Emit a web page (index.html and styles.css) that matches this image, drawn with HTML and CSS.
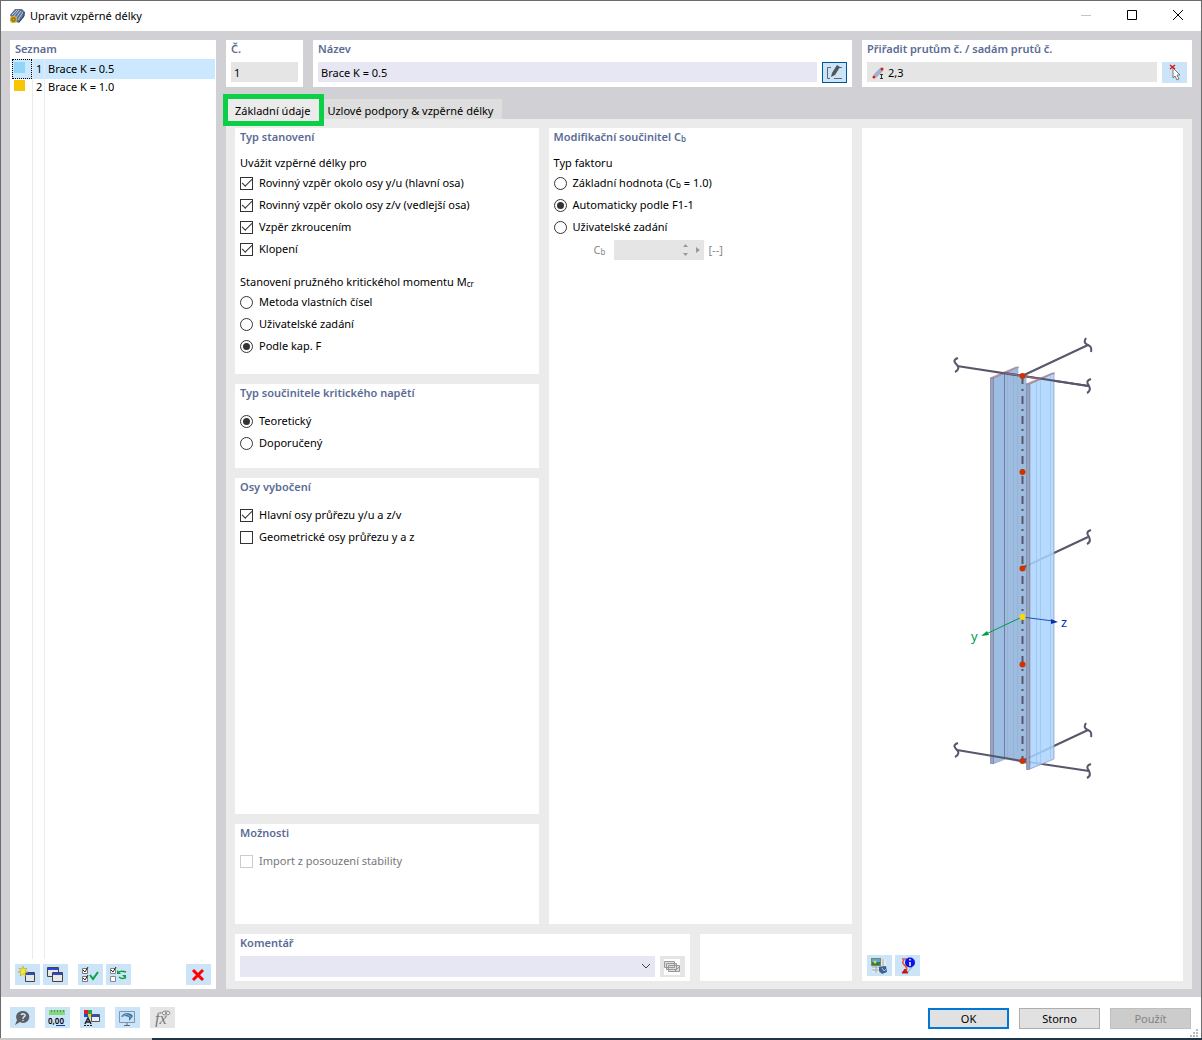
FILE: index.html
```
<!DOCTYPE html>
<html lang="cs">
<head>
    <meta charset="UTF-8">
    <meta name="viewport" content="width=device-width, initial-scale=1.0">
    <title>Upravit vzpěrné délky</title>
    <link rel="stylesheet" href="styles.css">
</head>
<body>
    <div class="window">
        <header class="titlebar">
            <svg class="app-icon" width="16" height="16" viewBox="0 0 16 16">
                <path d="M1 7l5-6 7 0 3 3-1 5-5 6-6-2z" fill="#5d7292"/>
                <path d="M3 7l5-5M5 8l5-6M7 10l5-7M9 12l5-8" stroke="#b9cbe2" stroke-width="1"/>
                <path d="M10 14l5-6V4" fill="none" stroke="#2c3d5c"/>
                <rect x="1" y="8" width="7" height="7" rx="3" fill="#d9ad2b"/>
                <path d="M3 10h3v3H3z" fill="none" stroke="#7b5c14"/>
            </svg>
            <h1>Upravit vzpěrné délky</h1>
            <div class="window-controls">
                <button type="button" aria-label="Minimalizovat" disabled>
                    <svg width="12" height="12" viewBox="0 0 12 12"><path d="M1 5.500h10" stroke="#c4c4c4"/></svg>
                </button>
                <button type="button" aria-label="Maximalizovat">
                    <svg width="12" height="12" viewBox="0 0 12 12"><path d="M1.500 .5h9v9h-9z" fill="none" stroke="#000"/></svg>
                </button>
                <button type="button" aria-label="Zavřít">
                    <svg width="12" height="12" viewBox="0 0 12 12"><path d="M1 0l10 10M11 0L1 10" stroke="#000"/></svg>
                </button>
            </div>
        </header>

        <main class="workspace">
            <aside class="card sidebar">
                <h2>Seznam</h2>
                <ul class="list">
                    <li class="selected"><span class="cell"><span class="swatch blue"></span></span><span class="number">1</span><span>Brace K = 0.5</span></li>
                    <li><span class="cell"><span class="swatch yellow"></span></span><span class="number">2</span><span>Brace K = 1.0</span></li>
                </ul>
                <div class="toolbar">
                    <button type="button" class="tool" aria-label="Nový">
                        <svg width="18" height="18" viewBox="0 0 18 18">
                            <path d="M7.500 6.500h9v9h-9z" fill="#e8e8e8" stroke="#444"/>
                            <path d="M8 7h8v2H8z" fill="#2b48d8"/>
                            <path d="M5 0l1 3 3-1-2 3 3 1-3 1 1 3-3-2-3 2 1-3-3-1 3-1-2-3 3 1z" fill="#f4ea2a" stroke="#a59b28" stroke-width=".5"/>
                        </svg>
                    </button>
                    <button type="button" class="tool" aria-label="Kopírovat">
                        <svg width="18" height="18" viewBox="0 0 18 18">
                            <path d="M1.500 1.500h11v9h-11z" fill="#e8e8e8" stroke="#444"/>
                            <path d="M2 2h10v2H2z" fill="#2b48d8"/>
                            <path d="M6.500 6.500h10v9h-10z" fill="#e8e8e8" stroke="#444"/>
                            <path d="M7 7h9v2H7z" fill="#2b48d8"/>
                        </svg>
                    </button>
                    <button type="button" class="tool spaced" aria-label="Vybrat vše">
                        <svg width="18" height="18" viewBox="0 0 18 18">
                            <path d="M1.500 2.500h5v5h-5zM1.500 10.500h5v5h-5z" fill="#fff" stroke="#777"/>
                            <path d="M2 4l2 2 3-5M2 12l2 2 3-5" fill="none" stroke="#222"/>
                            <path d="M9 9l3 4 5-7" fill="none" stroke="#10a040" stroke-width="2"/>
                        </svg>
                    </button>
                    <button type="button" class="tool" aria-label="Obrátit výběr">
                        <svg width="18" height="18" viewBox="0 0 18 18">
                            <path d="M1.500 2.500h5v5h-5zM1.500 10.500h5v5h-5z" fill="#fff" stroke="#888"/>
                            <path d="M2 4l2 2 3-5" fill="none" stroke="#222"/>
                            <path d="M9 7c2-3 5-2 8-1M17 11c-2 2-5 2-7 0" fill="none" stroke="#10a040" stroke-width="1.500"/>
                            <path d="M8 4v4h4zM17 13V9h-4z" fill="#10a040"/>
                        </svg>
                    </button>
                    <button type="button" class="tool last" aria-label="Smazat">
                        <svg width="18" height="18" viewBox="0 0 18 18"><path d="M4 4l10 10M14 4L4 14" stroke="#f00" stroke-width="3"/></svg>
                    </button>
                </div>
            </aside>

            <section class="content">
                <div class="top-row">
                    <div class="card">
                        <h2><label for="number">Č.</label></h2>
                        <input class="field readonly" type="text" id="number" value="1" readonly>
                    </div>
                    <div class="card">
                        <h2><label for="name">Název</label></h2>
                        <div class="field-row">
                            <input class="field" type="text" id="name" value="Brace K = 0.5">
                            <button type="button" class="tool outlined" aria-label="Upravit název">
                                <svg width="18" height="18" viewBox="0 0 18 18">
                                    <path d="M6 3.500H2.500v11H5M9 14.500h8M14 3.500h3" fill="none" stroke="#666"/>
                                    <path d="M6 13l1-4 5-8 3 2-5 8z" fill="#555"/>
                                </svg>
                            </button>
                        </div>
                    </div>
                    <div class="card">
                        <h2><label for="members">Přiřadit prutům č. / sadám prutů č.</label></h2>
                        <div class="field-row">
                            <div class="field readonly icon-field">
                                <svg width="14" height="14" viewBox="0 0 14 14">
                                    <path d="M3 10l7-7" stroke="#9eb2cf" stroke-width="4"/>
                                    <circle cx="2" cy="11" r="1.500" fill="#e01818"/>
                                    <circle cx="10" cy="3" r="1.500" fill="#e01818"/>
                                    <path d="M8 8.500h3M8 12.500h3M9.500 8v4" stroke="#333"/>
                                </svg>
                                <input type="text" id="members" value="2,3" readonly>
                            </div>
                            <button type="button" class="tool" aria-label="Vybrat pruty">
                                <svg width="18" height="18" viewBox="0 0 18 18">
                                    <path d="M8 4v10l2-2 2 4 2-1-2-4h3z" fill="#fff" stroke="#777"/>
                                    <path d="M5 1l5 4M10 1L5 5" stroke="#e01818" stroke-width="1.500"/>
                                </svg>
                            </button>
                        </div>
                    </div>
                </div>

                <div class="tabs" role="tablist">
                    <div class="tab-marked">
                        <button type="button" class="tab active" role="tab" aria-selected="true">Základní údaje</button>
                    </div>
                    <button type="button" class="tab" role="tab" aria-selected="false">Uzlové podpory &amp; vzpěrné délky</button>
                </div>

                <div class="pane">
                    <div class="settings">
                        <div class="columns">
                            <div class="stack">
                                <div class="card card-type">
                                    <h2>Typ stanovení</h2>
                                    <p class="caption">Uvážit vzpěrné délky pro</p>
                                    <label class="option"><input type="checkbox" checked>Rovinný vzpěr okolo osy y/u (hlavní osa)</label>
                                    <label class="option"><input type="checkbox" checked>Rovinný vzpěr okolo osy z/v (vedlejší osa)</label>
                                    <label class="option"><input type="checkbox" checked>Vzpěr zkroucením</label>
                                    <label class="option"><input type="checkbox" checked>Klopení</label>
                                    <p class="caption second">Stanovení pružného kritickéhol momentu M<sub>cr</sub></p>
                                    <label class="option"><input type="radio" name="moment">Metoda vlastních čísel</label>
                                    <label class="option"><input type="radio" name="moment">Uživatelské zadání</label>
                                    <label class="option"><input type="radio" name="moment" checked>Podle kap. F</label>
                                </div>
                                <div class="card card-stress">
                                    <h2>Typ součinitele kritického napětí</h2>
                                    <label class="option"><input type="radio" name="stress" checked>Teoretický</label>
                                    <label class="option"><input type="radio" name="stress">Doporučený</label>
                                </div>
                                <div class="card card-axes">
                                    <h2>Osy vybočení</h2>
                                    <label class="option"><input type="checkbox" checked>Hlavní osy průřezu y/u a z/v</label>
                                    <label class="option"><input type="checkbox">Geometrické osy průřezu y a z</label>
                                </div>
                                <div class="card card-options">
                                    <h2>Možnosti</h2>
                                    <label class="option disabled"><input type="checkbox" disabled>Import z posouzení stability</label>
                                </div>
                            </div>
                            <div class="card">
                                <h2>Modifikační součinitel C<sub>b</sub></h2>
                                <p class="caption">Typ faktoru</p>
                                <label class="option"><input type="radio" name="factor"><span>Základní hodnota (C<sub>b</sub> = 1.0)</span></label>
                                <label class="option"><input type="radio" name="factor" checked>Automaticky podle F1-1</label>
                                <label class="option"><input type="radio" name="factor">Uživatelské zadání</label>
                                <div class="factor">
                                    <label for="cb">C<sub>b</sub></label>
                                    <div class="spinner">
                                        <input type="text" id="cb" disabled>
                                        <svg width="22" height="14" viewBox="0 0 22 14">
                                            <path d="M1 4h5L3.500 1zM1 10h5l-2.500 3zM14 4v6l4-3z" fill="#999"/>
                                        </svg>
                                    </div>
                                    <span>[--]</span>
                                </div>
                            </div>
                        </div>
                        <div class="bottom-row">
                            <div class="card">
                                <h2><label for="comment">Komentář</label></h2>
                                <div class="field-row">
                                    <div class="combo">
                                        <select class="field" id="comment"><option></option></select>
                                        <svg width="10" height="6" viewBox="0 0 10 6"><path d="M1 1l4 4 4-4" fill="none" stroke="#444"/></svg>
                                    </div>
                                    <button type="button" class="tool" aria-label="Komentáře" disabled>
                                        <svg width="18" height="18" viewBox="0 0 18 18">
                                            <path d="M1 1h16v16H1z" fill="#fff"/>
                                            <path d="M1.500 3.500h10v6h-10zM3.500 5.500h10v6h-10zM5.500 7.500h11v6h-11z" fill="#ddd" stroke="#999"/>
                                            <path d="M12 13l4-4" stroke="#999"/>
                                        </svg>
                                    </button>
                                </div>
                            </div>
                            <div class="card"></div>
                        </div>
                    </div>

                    <div class="card preview">
                        <svg class="model" width="161" height="480" viewBox="942 301 161 480">
                            <!-- back flange and web -->
                            <path d="M993 377l25-10v386l-25 10z" fill="#9dbde2" stroke="#8b95b5" stroke-width=".5"/>
                            <path d="M1004.500 373l22 4v386l-22-5z" fill="#9dbce0"/>
                            <path d="M1004.500 372v386" stroke="#747d9b"/>
                            <path d="M1007.500 374v383M1013.500 374v381M1017.500 375v376" stroke="#8dabd0" stroke-width=".5"/>
                            <path d="M990.500 377.500h3v385h-3z" fill="#94a4c4" stroke="#807f99" stroke-width=".7"/>
                            <path d="M990 377l26-11h3l-25 11z" fill="#c693a4" stroke="#807f99" stroke-width=".5"/>
                            <!-- members behind the front flange -->
                            <g fill="none" stroke="#57566a" stroke-width="2">
                                <path d="M957 365l65 10 67 10M1022 375l66-31M1022 567l66-31M957 749l65 11 67 10M1022 760l66-31"/>
                                <path d="M958 357c-6 2-3 5-1 7s2 5-2 7M1086 337c-3 5 0 6 2 7s4 2 3 7M1091 378c-6 2-3 5-2 7s2 5-2 7M1091 529c-6 2-3 5-2 7s2 5-2 7M958 742c-6 2-3 5-1 7s2 5-2 7M1086 722c-3 5 0 6 2 7s4 2 3 7M1091 763c-6 2-3 5-2 7s2 5-2 7"/>
                            </g>
                            <path d="M1022.500 375v383" stroke="#57566a" stroke-width="2" stroke-dasharray="8 5 2 5"/>
                            <!-- front flange -->
                            <path d="M1030 383l24-11v386l-24 10z" fill="#aad5ff" fill-opacity=".85" stroke="#8b95b5" stroke-width=".7"/>
                            <path d="M1036.500 381v384M1040.500 379v384M1050.500 375v383" stroke="#99c1eb" stroke-width=".7"/>
                            <path d="M1026.500 383.500h3v385h-3z" fill="#94a4c4" stroke="#807f99" stroke-width=".7"/>
                            <path d="M1026 383l26-11h3l-25 11z" fill="#c693a4" stroke="#807f99" stroke-width=".5"/>
                            <path d="M1005 372l83 13" stroke="#57566a" stroke-width="2"/>
                            <path d="M1005 372l36 6" stroke="#a56b7d"/>
                            <!-- local axes -->
                            <path d="M1022 616l-36 17" stroke="#009b48"/>
                            <path d="M981 635l6-5 2 4z" fill="#009b48"/>
                            <path d="M1022 616l31 4" stroke="#1d50bd"/>
                            <path d="M1058 621l-7-3v5z" fill="#0033b5"/>
                            <g fill="#cc3300">
                                <circle cx="1022.500" cy="375" r="3"/>
                                <circle cx="1022.500" cy="471" r="3"/>
                                <circle cx="1022.500" cy="567.500" r="3"/>
                                <circle cx="1022.500" cy="663.500" r="3"/>
                                <circle cx="1022.500" cy="760" r="3"/>
                            </g>
                            <circle cx="1022.500" cy="616" r="3" fill="#ffd800"/>
                            <text x="971" y="640" class="axis-y">y</text>
                            <text x="1061" y="626" class="axis-z">z</text>
                        </svg>
                        <div class="toolbar">
                            <button type="button" class="tool" aria-label="Uložit obrázek">
                                <svg width="18" height="18" viewBox="0 0 18 18">
                                    <path d="M2 2h14v14H2z" fill="#e3eaee"/>
                                    <path d="M10 2v14M13 2v8M2 10h14M2 13h8M6 8v8" stroke="#9fabb1"/>
                                    <path d="M1 1h10v8H1z" fill="#6b8d68"/>
                                    <path d="M2 2h8v3H2z" fill="#5aa5dc"/>
                                    <path d="M2 5h8v3H2z" fill="#2f7d49"/>
                                    <circle cx="5" cy="5" r="1.500" fill="#f4d22a"/>
                                    <path d="M9 10l7-1 1 6-5 2-3-3z" fill="#3e628e"/>
                                    <path d="M12 11l2 3 2-2" fill="none" stroke="#a9c3e4"/>
                                </svg>
                            </button>
                            <button type="button" class="tool" aria-label="Informace">
                                <svg width="18" height="18" viewBox="0 0 18 18">
                                    <path d="M6 3c-5 5 6 5 2 11" fill="none" stroke="#f04a28" stroke-width="1.500"/>
                                    <path d="M14 10l-4 5" stroke="#68b6b0"/>
                                    <path d="M4 2h5M4 16h6l-3-4z" stroke="#c01818" fill="#c01818"/>
                                    <circle cx="12" cy="5.500" r="5" fill="#0a12e8"/>
                                    <path d="M12 2v1.500M12 5v4" stroke="#fff" stroke-width="1.500"/>
                                </svg>
                            </button>
                        </div>
                    </div>
                </div>
            </section>
        </main>

        <footer class="footer">
            <button type="button" class="tool" aria-label="Nápověda">
                <svg width="18" height="18" viewBox="0 0 18 18">
                    <path d="M10 2a6 6 0 1 1-3 11l-5 3 2-5a6 6 0 0 1 6-9z" fill="#5c6066"/>
                    <path d="M8 6c1-2 5-1 4 1-1 1-2 1-2 3M10 11v1" fill="none" stroke="#cce4f7" stroke-width="1.500"/>
                </svg>
            </button>
            <button type="button" class="tool" aria-label="Jednotky">
                <svg width="18" height="18" viewBox="0 0 18 18">
                    <path d="M1 1h16v5H1z" fill="#86d67c"/>
                    <path d="M3.500 1v2M6.500 1v2M9.500 1v2M12.500 1v2M15.500 1v2" stroke="#4b9f50"/>
                    <text x="0" y="15" class="icon-text">0,00</text>
                    <path d="M8 16.500h9" stroke="#1c3fa5"/>
                </svg>
            </button>
            <button type="button" class="tool" aria-label="Zobrazení">
                <svg width="18" height="18" viewBox="0 0 18 18">
                    <path d="M1 1h4v4H1z" fill="#e02020"/>
                    <path d="M5 1h4v4H5z" fill="#28a040"/>
                    <path d="M1 5h4v3H1z" fill="#2048d8"/>
                    <path d="M5 5h4v3H5z" fill="#e8d020"/>
                    <path d="M2 15l3-6 3 6M3 13h4" fill="none" stroke="#222" stroke-width="1.500"/>
                    <path d="M1 16.500h9" stroke="#222" stroke-dasharray="2 1"/>
                    <path d="M8.500 5.500h8v7h-8z" fill="#eee" stroke="#555"/>
                    <path d="M9 6h7v2H9z" fill="#2b48d8"/>
                </svg>
            </button>
            <button type="button" class="tool" aria-label="Grafika">
                <svg width="18" height="18" viewBox="0 0 18 18">
                    <path d="M1.500 2.500h15v11h-15z" fill="#c5e3fa" stroke="#8195a8"/>
                    <path d="M9 14v2M6 16.500h6" stroke="#667"/>
                    <path d="M3 8c2-4 8-6 12-1l-4 5V8L7 7z" fill="#466e9d"/>
                    <path d="M5 7l4-2 4 3" fill="none" stroke="#8eb2d8"/>
                </svg>
            </button>
            <button type="button" class="tool" aria-label="Vzorce" disabled>
                <svg width="18" height="18" viewBox="0 0 18 18">
                    <text x="2" y="15" class="icon-formula">fx</text>
                    <ellipse cx="13" cy="4" rx="4" ry="2" fill="#eee" stroke="#888"/>
                    <circle cx="13" cy="4" r="1" fill="#777"/>
                </svg>
            </button>
            <div class="actions">
                <button type="button" class="button primary">OK</button>
                <button type="button" class="button">Storno</button>
                <button type="button" class="button" disabled>Použít</button>
            </div>
            <svg class="grip" width="9" height="9" viewBox="0 0 9 9">
                <path d="M6 0h2v2H6zM3 3h2v2H3zM6 3h2v2H6zM0 6h2v2H0zM3 6h2v2H3zM6 6h2v2H6z" fill="#bbb"/>
            </svg>
        </footer>
    </div>
</body>
</html>
```

FILE: styles.css
```
* {
    box-sizing: border-box;
}
body {
    margin: 0;
    font-family: "Noto Sans", "Open Sans", sans-serif;
    font-size: 11px;
    line-height: 18px;
    color: #000;
    background: linear-gradient(90deg, #c8c8c8 152px, #1f3444 152px);
}
button, input, select {
    font: inherit;
    color: inherit;
    margin: 0;
    padding: 0;
    border: none;
    border-radius: 0;
}
h1, h2, p, ul {
    margin: 0;
    padding: 0;
}
sub {
    font-size: 8px;
    line-height: 0;
    vertical-align: -1px;
}
svg {
    display: block;
    flex: none;
}

.window {
    display: flex;
    flex-direction: column;
    min-height: calc(100vh - 2px);
    margin-bottom: 2px;
    background: #fff;
    border: 1px solid #6b6b6b;
    border-bottom: none;
}
.titlebar {
    display: flex;
    align-items: center;
    height: 30px;
    padding-left: 8px;
}
.titlebar h1 {
    margin-left: 5px;
    font-size: 11px;
    font-weight: 400;
}
.window-controls {
    display: flex;
    margin-left: auto;
}
.window-controls button {
    display: flex;
    align-items: center;
    justify-content: center;
    width: 46px;
    height: 30px;
    background: none;
}

.workspace {
    display: flex;
    flex: 1;
    gap: 10px;
    padding: 9px 9px 8px;
    background: #d1d0d5;
}
.card {
    background: #fff;
    padding: 0 5px;
}
.card h2 {
    font-size: 11px;
    font-weight: 600;
    color: #5b6b96;
    white-space: nowrap;
}

/* list of lengths */
.sidebar {
    display: flex;
    flex-direction: column;
    flex: none;
    width: 206px;
    padding-bottom: 4px;
}
.list {
    flex: 1;
    margin: 1px -4px 5px -3px;
    list-style: none;
    background: linear-gradient(#ebebeb, #ebebeb) 20px 0 / 1px 100% no-repeat, linear-gradient(#ebebeb, #ebebeb) 32px 0 / 1px 100% no-repeat;
}
.list li {
    display: grid;
    grid-template-columns: 20px 13px 1fr;
    height: 18px;
    line-height: 20px;
}
.list li > :last-child {
    padding-left: 3px;
}
.list .selected .number, .list .selected > :last-child {
    background: #cce8ff;
}
.list .number {
    padding-left: 3px;
    border-left: 1px solid #ebebeb;
    border-right: 1px solid #ebebeb;
}
.cell {
    padding: 3px 2px;
}
.selected .cell {
    padding: 2px 1px;
    border: 1px dotted #000;
    background: #cce8ff;
}
.swatch {
    display: block;
    width: 11px;
    height: 11px;
}
.blue {
    background: #8fd6f7;
}
.yellow {
    background: #f7c600;
}

/* buttons */
.toolbar {
    display: flex;
    gap: 3px;
}
.tool {
    display: flex;
    flex: none;
    align-items: center;
    justify-content: center;
    width: 25px;
    height: 21px;
    padding-right: 1px;
    background: #cce4f7;
}
.tool:disabled {
    background: #e5e5e5;
}
.outlined {
    border: 1px solid #005499;
}
.spaced {
    margin-left: 7px;
}
.last {
    margin-left: auto;
}

.content {
    display: flex;
    flex-direction: column;
    flex: 1;
    min-width: 0;
}
.top-row {
    display: grid;
    grid-template-columns: 77px 1fr 330px;
    gap: 10px;
}
.top-row .card {
    height: 47px;
}
.field {
    display: block;
    width: 100%;
    height: 20px;
    margin-top: 4px;
    padding: 1px 3px 0;
    background: #e6e7f2;
    outline: none;
}
.field.readonly {
    width: 100%;
    background: #e5e5e5;
}
.top-row .card:first-child .field {
    width: 67px;
}
.field-row {
    display: flex;
    gap: 5px;
}
.field-row .tool {
    margin-top: 4px;
}
.icon-field {
    display: flex;
    align-items: center;
    gap: 2px;
    padding: 1px 5px 0;
}
.icon-field input {
    flex: 1;
    background: none;
    outline: none;
}

/* tabs */
.tabs {
    display: flex;
    margin-top: 12px;
}
.tab {
    height: 20px;
    padding: 3px 9px 0 4px;
    background: #dedede;
    white-space: nowrap;
}
.tab.active {
    padding: 3px 13px 0 9px;
    background: #ebebeb;
}
.tab-marked {
    display: flex;
    position: relative;
}
.tab-marked::after {
    content: "";
    position: absolute;
    inset: -5px -1px -7px -3px;
    border: 5px solid #0bcf45;
}
.pane {
    display: grid;
    grid-template-columns: 1fr 321px;
    flex: 1;
    gap: 10px;
    padding: 9px 9px 8px;
    background: #ebebeb;
}
.settings {
    display: flex;
    flex-direction: column;
    gap: 10px;
}
.columns {
    display: grid;
    grid-template-columns: 1fr 1fr;
    flex: 1;
    gap: 10px;
}
.stack {
    display: flex;
    flex-direction: column;
    gap: 10px;
}
.columns h2 {
    margin-bottom: 8px;
}
.card-type {
    padding-bottom: 17px;
}
.card-stress {
    padding-bottom: 14px;
}
.card-axes {
    flex: 1;
}
.card-options {
    padding-bottom: 52px;
}
.bottom-row {
    display: grid;
    grid-template-columns: 3fr 1fr;
    gap: 10px;
}
.bottom-row .card {
    height: 47px;
}

/* options */
.caption.second {
    margin-top: 13px;
}
.option {
    display: flex;
    align-items: center;
    gap: 6px;
    height: 22px;
    white-space: nowrap;
}
.option.disabled {
    color: #777;
}
.option input {
    display: grid;
    place-content: center;
    width: 13px;
    height: 13px;
    appearance: none;
    border: 1px solid #333;
    background: #fff;
}
.option input:disabled {
    border-color: #ccc;
}
.option input[type="radio"] {
    border-radius: 50%;
}
.option input[type="checkbox"]:checked::before {
    content: "";
    width: 9px;
    height: 4px;
    margin-bottom: 3px;
    border-left: 1px solid #333;
    border-bottom: 1px solid #333;
    transform: rotate(-45deg);
}
.option input[type="radio"]:checked::before {
    content: "";
    width: 7px;
    height: 7px;
    border-radius: 50%;
    background: #333;
}
.factor {
    display: flex;
    align-items: center;
    margin: 2px 0 0 40px;
    color: #888;
}
.factor > label {
    width: 20px;
}
.spinner {
    display: flex;
    align-items: center;
    width: 90px;
    height: 20px;
    margin-right: 5px;
    background: #e5e5e5;
}
.spinner input {
    flex: 1;
    min-width: 0;
    background: none;
}
.combo {
    position: relative;
    flex: 1;
}
.combo .field {
    height: 21px;
    appearance: none;
}
.combo svg {
    position: absolute;
    right: 4px;
    top: 11px;
    pointer-events: none;
}

/* model preview */
.preview {
    display: flex;
    flex-direction: column;
    padding-bottom: 5px;
}
.model {
    margin: auto;
}
.axis-y, .axis-z {
    font-size: 13px;
    fill: #009b48;
}
.axis-z {
    fill: #0033b5;
}

.footer {
    position: relative;
    display: flex;
    align-items: center;
    gap: 10px;
    height: 41px;
    padding: 0 10px 0 9px;
}
.actions {
    display: flex;
    gap: 10px;
    margin: 2px 0 0 auto;
}
.button {
    width: 81px;
    height: 21px;
    background: #e1e1e1;
    border: 1px solid #adadad;
}
.button.primary {
    border: 2px solid #0078d7;
}
.button:disabled {
    background: #ccc;
    border-color: #bfbfbf;
    color: #838383;
}
.grip {
    position: absolute;
    right: 2px;
    bottom: 0;
}
.icon-text {
    font-size: 8px;
    font-weight: 600;
}
.icon-formula {
    font: italic 16px "Liberation Serif", serif;
    fill: #777;
}
```
